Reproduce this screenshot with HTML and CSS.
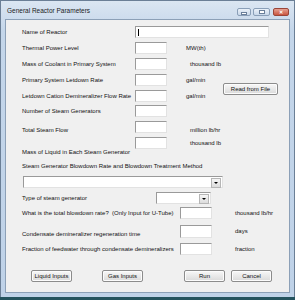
FILE: index.html
```html
<!DOCTYPE html>
<html lang="en">
<head>
<meta charset="UTF-8">
<title>General Reactor Parameters</title>
<link rel="stylesheet" href="styles.css">
</head>
<body>
<div class="window">
    <div class="titlebar">
        <span class="title">General Reactor Parameters</span>
        <div class="caption-buttons">
            <span class="cap cap-min"><i class="min-glyph"></i></span>
            <span class="cap cap-max"><i class="max-glyph"></i></span>
            <span class="cap cap-close">&#10005;</span>
        </div>
    </div>

    <div class="client">
        <div class="upper">
            <div class="lbl">Name of Reactor</div>
            <div class="box box-wide"><span class="caret"></span></div>

            <div class="lbl">Thermal Power Level</div>
            <div class="box"></div>
            <div class="unit">MW(th)</div>

            <div class="lbl">Mass of Coolant in Primary System</div>
            <div class="box"></div>
            <div class="unit unit-far">thousand lb</div>

            <div class="lbl">Primary System Letdown Rate</div>
            <div class="box"></div>
            <div class="unit">gal/min</div>

            <div class="lbl">Letdown Cation Demineralizer Flow Rate</div>
            <div class="box"></div>
            <div class="unit">gal/min</div>

            <div class="lbl">Number of Steam Generators</div>
            <div class="box"></div>
            <div class="unit"></div>

            <div class="lbl lbl-low">Total Steam Flow</div>
            <div class="box"></div>
            <div class="unit unit-far lbl-low">million lb/hr</div>

            <div class="lbl lbl-lower">Mass of Liquid in Each Steam Generator</div>
            <div class="box"></div>
            <div class="unit unit-far unit-high">thousand lb</div>

            <button class="btn btn-read">Read from File</button>
        </div>

        <div class="section-lbl">Steam Generator Blowdown Rate and Blowdown Treatment Method</div>
        <div class="combo combo-wide"><span class="arrow"></span></div>

        <div class="lower">
            <div class="lbl">Type of steam generator</div>
            <div class="combo combo-small"><span class="arrow"></span></div>
            <div class="unit"></div>

            <div class="lbl">What is the total blowdown rate?&nbsp; (Only Input for U-Tube)</div>
            <div class="box"></div>
            <div class="unit">thousand lb/hr</div>

            <div class="lbl lbl-low">Condensate demineralizer regeneration time</div>
            <div class="box box-tall"></div>
            <div class="unit unit-high">days</div>

            <div class="lbl">Fraction of feedwater through condensate demineralizers</div>
            <div class="box"></div>
            <div class="unit unit-high">fraction</div>
        </div>

        <div class="actions">
            <button class="btn btn-liquid">Liquid Inputs</button>
            <button class="btn btn-gas">Gas Inputs</button>
            <button class="btn btn-run">Run</button>
            <button class="btn btn-cancel">Cancel</button>
        </div>
    </div>
</div>
</body>
</html>
```

FILE: styles.css
```css
body {
    margin: 0;
    padding: 0;
    font-family: 'Liberation Sans', Arial, sans-serif;
    font-size: 6px;
    color: #111;
    background-color: #24535e;
}

.window {
    width: 295px;
    height: 297px;
    background: linear-gradient(#dbe6f2, #c4d6ea 30px, #bfd2e8);
    box-sizing: border-box;
    border: 1px solid #6b7f96;
    border-bottom: none;
    display: flex;
    flex-direction: column;
}

.titlebar {
    height: 18px;
    display: flex;
    align-items: center;
    justify-content: space-between;
    padding: 0 5px 0 6px;
}
.title {
    font-size: 6.5px;
    color: #1b1b1b;
}

/* min / max / close */
.caption-buttons {
    display: flex;
    align-items: flex-start;
    margin-top: 4px;
}
.cap {
    box-sizing: border-box;
    height: 8px;
    border: 1px solid #8a9fb8;
    border-radius: 2px;
    background: linear-gradient(#eaf1f9, #c8d7e9);
    display: flex;
    align-items: center;
    justify-content: center;
}
.cap-min { width: 14px; }
.cap-max { width: 17px; margin-left: 2px; }
.cap-close {
    width: 16px;
    margin-left: 3px;
    background: linear-gradient(#e6a092, #c9553f);
    border-color: #9a4538;
    color: #fff;
    font-size: 5px;
    font-weight: bold;
    line-height: 1;
}
.min-glyph {
    width: 4px;
    height: 1px;
    margin-top: 2px;
    background-color: #fff;
    border: 1px solid #6a7f9a;
}
.max-glyph {
    width: 4px;
    height: 2px;
    background-color: #fff;
    border: 1px solid #6a7f9a;
}

.client {
    flex: 1;
    margin: 0 4px 4px 4px;
    background-color: #f0f0f0;
    border: 1px solid #8ca0b7;
    padding: 6px 0 0 16px;
}

.upper {
    display: grid;
    grid-template-columns: 113px 32px 19px 37px 55px;
    grid-auto-rows: 12px;
    row-gap: 3.9px;
}
.upper .unit { grid-column: 4; }
.upper .lbl { grid-column: 1; }
.upper .box { grid-column: 2; }

.lbl,
.unit {
    display: flex;
    align-items: center;
    white-space: nowrap;
    height: 12px;
}
.lbl-low { padding-top: 3px; }
.lbl-lower { padding-top: 9px; }
.unit-high { padding-bottom: 3px; }
.unit-far { padding-left: 4px; }

.box {
    background-color: #fff;
    border-style: solid;
    border-width: 1px;
    border-color: #9a9a9a #e2e2e2 #e2e2e2 #9a9a9a;
    box-sizing: border-box;
    height: 12px;
}
.box-tall { height: 13px; }
.box-wide {
    grid-column: 2 / span 4 !important;
    width: 134px;
    display: flex;
    align-items: center;
    padding-left: 2px;
}
.caret {
    width: 1px;
    height: 7px;
    background-color: #000;
}

.btn {
    font-family: 'Liberation Sans', Arial, sans-serif;
    font-size: 6px;
    color: #111;
    height: 12px;
    padding: 0;
    border: 1px solid #8c8c8c;
    border-radius: 2px;
    background: linear-gradient(#f8f8f8, #e9e9e9 50%, #dadada);
    box-shadow: inset 0 0 0 1px #fcfcfc;
    cursor: pointer;
}
.btn-read {
    grid-column: 5;
    grid-row: 4 / span 2;
    align-self: center;
    margin-top: 2px;
    width: 55px;
}

.section-lbl {
    margin-top: 14px;
    white-space: nowrap;
}

.combo {
    background-color: #fff;
    border-style: solid;
    border-width: 1px;
    border-color: #9a9a9a #e2e2e2 #e2e2e2 #9a9a9a;
    box-sizing: border-box;
    height: 12px;
    display: flex;
    justify-content: flex-end;
    padding: 1px;
}
.combo-wide {
    width: 200px;
    margin: 7px 0 0 1px;
}
.combo-small {
    width: 55px;
    margin-left: -24px;
}
.arrow {
    width: 8px;
    height: 8px;
    border: 1px solid #b6b6b6;
    background: linear-gradient(#f6f6f6, #dcdcdc);
    position: relative;
}
.arrow::after {
    content: "";
    position: absolute;
    left: 2px;
    top: 3px;
    border-left: 2px solid transparent;
    border-right: 2px solid transparent;
    border-top: 2px solid #000;
}

.lower {
    display: grid;
    grid-template-columns: 158px 32px 23px auto;
    grid-template-rows: 15px 18px 18px 12px;
    align-items: start;
    margin-top: 4px;
}
.lower .unit { grid-column: 4; }

.actions {
    display: flex;
    margin-top: 15px;
    padding-left: 9px;
}
.btn-liquid { width: 41px; }
.btn-gas { width: 41px; margin-left: 30px; }
.btn-run { width: 41px; margin-left: 41px; }
.btn-cancel { width: 41px; margin-left: 6px; }
```
